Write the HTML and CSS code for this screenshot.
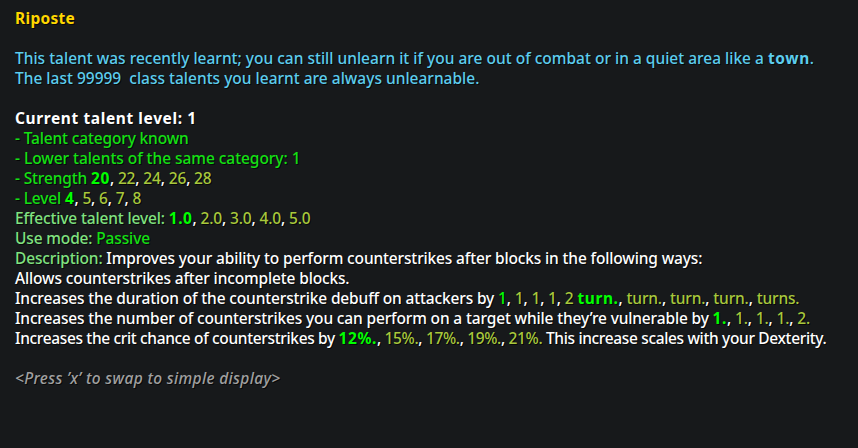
FILE: index.html
```html
<!DOCTYPE html>
<html>
<head>
<meta charset="utf-8">
<link rel="stylesheet" href="styles.css">
</head>
<body>
<div class="tip">
  <div class="line title">Riposte</div>
  <div class="line"></div>
  <div class="line blue">This talent was recently learnt; you can still unlearn it if you are out of combat or in a quiet area like a <b>town</b>.</div>
  <div class="line blue">The last 99999&nbsp; class talents you learnt are always unlearnable.</div>
  <div class="line"></div>
  <div class="line white"><b>Current talent level: 1</b></div>
  <div class="line green">- Talent category known</div>
  <div class="line green wide">- Lower talents of the same category: 1</div>
  <div class="line green">- Strength <b class="hi">20</b><span class="white">, </span><span class="olive">22</span><span class="white">, </span><span class="olive">24</span><span class="white">, </span><span class="olive">26</span><span class="white">, </span><span class="olive">28</span></div>
  <div class="line green">- Level <b class="hi">4</b><span class="white">, </span><span class="olive">5</span><span class="white">, </span><span class="olive">6</span><span class="white">, </span><span class="olive">7</span><span class="white">, </span><span class="olive">8</span></div>
  <div class="line lgreen">Effective talent level: <b class="hi">1.0</b><span class="white">, </span><span class="olive">2.0</span><span class="white">, </span><span class="olive">3.0</span><span class="white">, </span><span class="olive">4.0</span><span class="white">, </span><span class="olive">5.0</span></div>
  <div class="line lgreen">Use mode: <span class="green">Passive</span></div>
  <div class="line lgreen">Description: <span class="white">Improves your ability to perform counterstrikes after blocks in the following ways:</span></div>
  <div class="line white">Allows counterstrikes after incomplete blocks.</div>
  <div class="line white">Increases the duration of the counterstrike debuff on attackers by <span class="hi">1</span>, <span class="olive">1</span>, <span class="olive">1</span>, <span class="olive">1</span>, <span class="olive">2</span> <b class="hi">turn.</b>, <span class="olive">turn.</span>, <span class="olive">turn.</span>, <span class="olive">turn.</span>, <span class="olive">turns.</span></div>
  <div class="line white">Increases the number of counterstrikes you can perform on a target while they’re vulnerable by <b class="hi">1.</b>, <span class="olive">1.</span>, <span class="olive">1.</span>, <span class="olive">1.</span>, <span class="olive">2.</span></div>
  <div class="line white tight">Increases the crit chance of counterstrikes by <b class="hi">12%.</b>, <span class="olive">15%.</span>, <span class="olive">17%.</span>, <span class="olive">19%.</span>, <span class="olive">21%.</span> This increase scales with your Dexterity.</div>
  <div class="line"></div>
  <div class="line press">&lt;Press ’x’ to swap to simple display&gt;</div>
</div>
</body>
</html>
```

FILE: styles.css
```css
html, body {
  margin: 0;
  padding: 0;
  background: #17191b;
}
body {
  width: 858px;
  height: 448px;
  overflow: hidden;
}
.tip {
  padding: 8px 15px 0 15px;
  font-family: "Noto Sans", "DejaVu Sans", sans-serif;
  font-size: 15.5px;
  font-weight: 500;
  letter-spacing: -0.15px;
  color: #ffffff;
  text-shadow: 1px 1px 0 rgba(0, 0, 0, 0.7);
}
.line {
  height: 20px;
  line-height: 20px;
  white-space: nowrap;
}
b { font-weight: 700; letter-spacing: 0.6px; }
.title { color: #ffd700; font-weight: 700; letter-spacing: 0.3px; }
.blue { color: #5ccdee; letter-spacing: 0; }
.white { color: #ffffff; }
.green { color: #14e014; }
.wide { letter-spacing: -0.05px; }
.hi { color: #00ff00; }
.olive { color: #a8c83c; }
.lgreen { color: #80e280; }
.tight { letter-spacing: -0.35px; }
.press { color: #a0a0a0; font-style: italic; letter-spacing: 0.34px; }
```
